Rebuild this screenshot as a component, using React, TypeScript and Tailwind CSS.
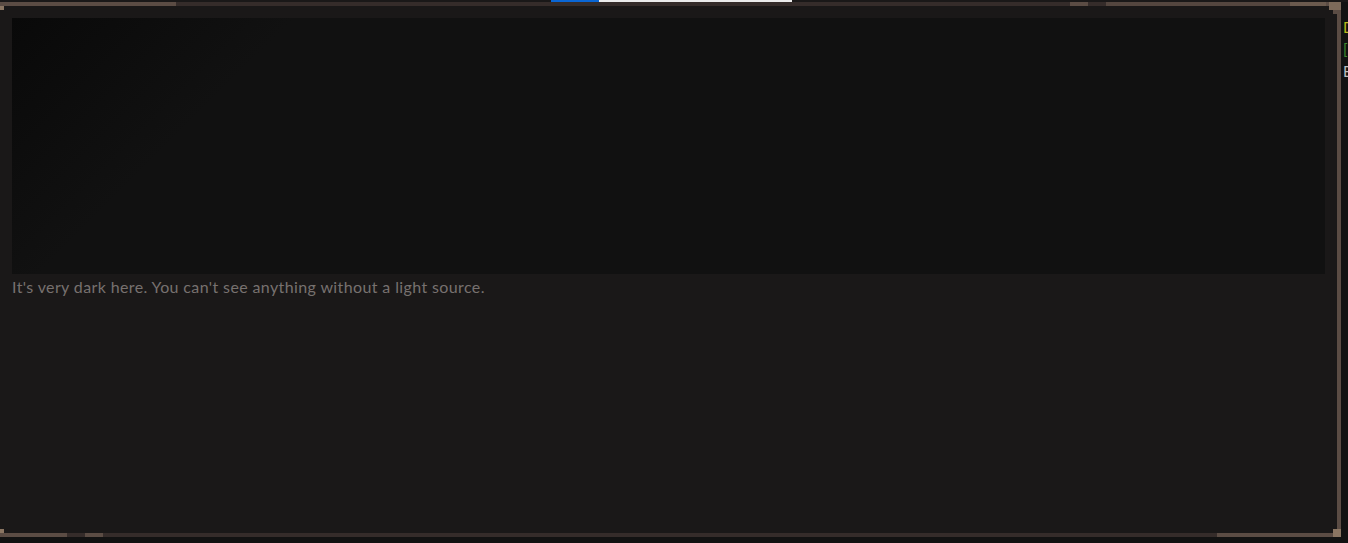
// Dark room view: framed scene panel with a clipped side column
import React from 'react';

// Border strip segments: [width, colour]
const topSegments: [number, string][] = [
  [176, '#5b4c44'],
  [894, '#352c2a'],
  [18, '#5b4c44'],
  [18, '#352c2a'],
  [184, '#54463f'],
  [36, '#6b5a4e'],
];

const bottomSegments: [number, string][] = [
  [67, '#5b4c44'],
  [18, '#352c2a'],
  [18, '#5b4c44'],
  [1114, '#352c2a'],
  [117, '#5b4c44'],
];

const Strip: React.FC<{ segments: [number, string][] }> = ({ segments }) => (
  <div className="flex h-full w-full">
    {segments.map(([w, c], i) => (
      <div key={i} className="h-full shrink-0" style={{ width: w, backgroundColor: c }} />
    ))}
    <div className="h-full flex-1 bg-[#5b4c44]" />
  </div>
);

const App: React.FC = () => {
  return (
    <div className="h-[543px] w-full overflow-hidden bg-[#121212] font-['Lato','Open_Sans',sans-serif]">
      {/* loading bar */}
      <div className="flex h-[2px] bg-[#1a1818]">
        <div className="w-[551px]" />
        <div className="w-[48px] bg-[#0a66d4]" />
        <div className="w-[193px] bg-[#ececec]" />
      </div>

      <div className="flex">
        {/* main framed panel */}
        <div className="relative flex h-[535px] w-[1341px] shrink-0 flex-col bg-[#1a1818]">
          <div className="h-[4px] shrink-0">
            <Strip segments={topSegments} />
          </div>

          <div className="flex flex-1">
            <div className="flex-1 px-3 pt-3">
              <div className="h-[256px] w-full bg-[linear-gradient(135deg,#090909_0%,#111111_18%,#111111_100%)]" />
              <p className="mt-[1px] text-[16px] leading-6 tracking-[0.38px] text-[#77716f]">
                It&#39;s very dark here. You can&#39;t see anything without a light source.
              </p>
            </div>
            <div className="w-[4px] shrink-0 bg-[#5b4c44]" />
          </div>

          <div className="h-[4px] shrink-0">
            <Strip segments={bottomSegments} />
          </div>

          {/* corner pieces */}
          <div className="absolute left-0 top-[4px] h-[4px] w-[4px] bg-[#8a7562]" />
          <div className="absolute left-0 bottom-[4px] h-[4px] w-[4px] bg-[#8a7562]" />
          <div className="absolute right-0 top-0 h-[8px] w-[12px] bg-[#7d6a5a]" />
          <div className="absolute right-0 top-[8px] h-[4px] w-[8px] bg-[#5b4c44]" />
          <div className="absolute right-0 bottom-0 h-[8px] w-[8px] bg-[#8a7562]" />
        </div>

        {/* side column, mostly off-screen */}
        <div className="w-[200px] shrink-0 pl-[2px] pt-[14px] text-[15px] leading-[22px]">
          <div className="text-[#b9b81c]">Darkness</div>
          <div className="text-[#3f8a2e]">[Map]</div>
          <div className="text-[#bdbdbd]">Exits</div>
        </div>
      </div>
    </div>
  );
};

export default App;
